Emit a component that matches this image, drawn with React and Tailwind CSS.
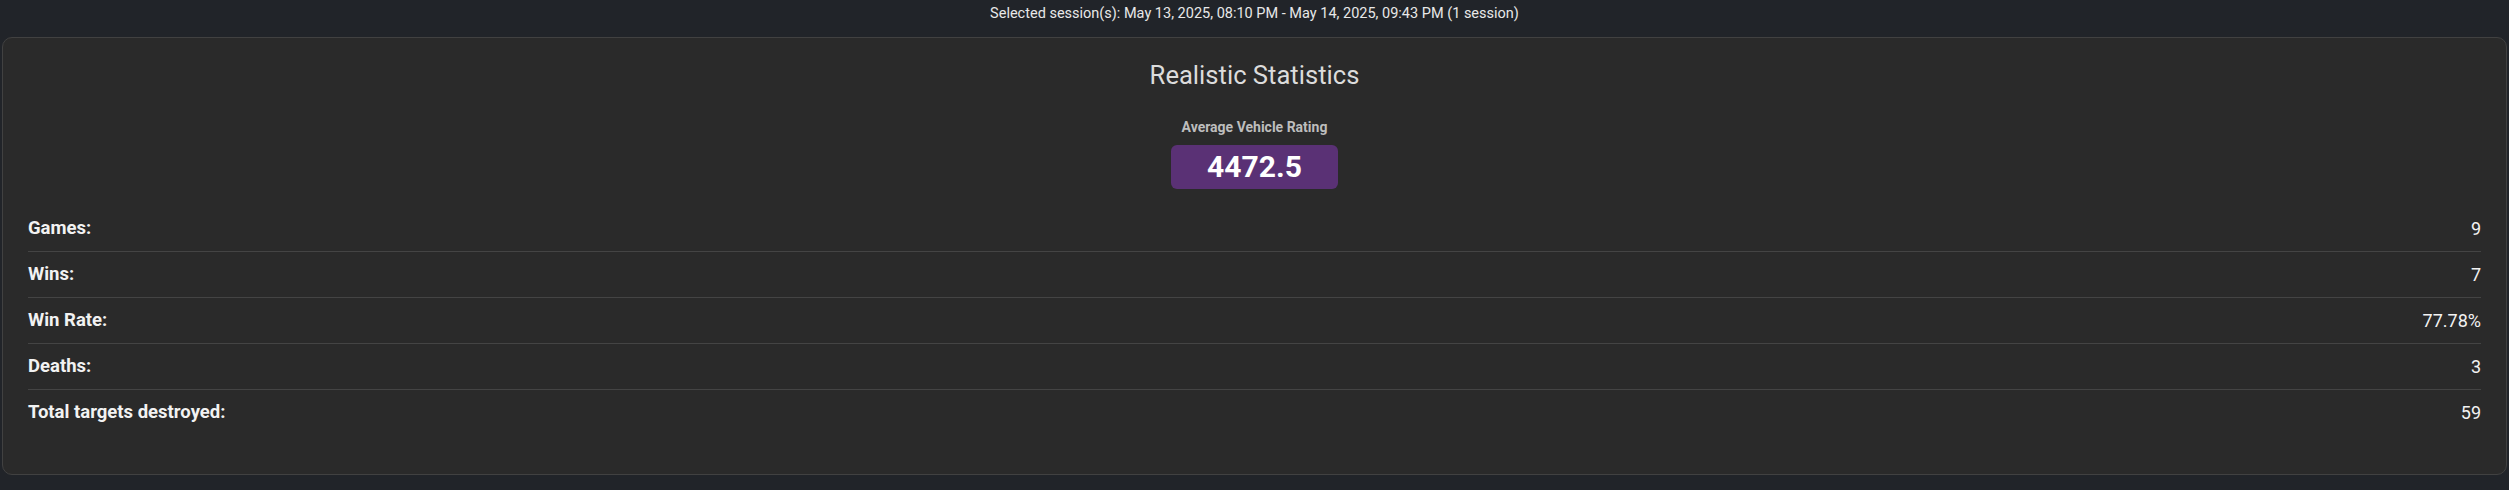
const stats = [
  { label: "Games:", value: "9" },
  { label: "Wins:", value: "7" },
  { label: "Win Rate:", value: "77.78%" },
  { label: "Deaths:", value: "3" },
  { label: "Total targets destroyed:", value: "59" },
];

const App = () => {
  return (
    <div className="min-h-screen bg-[#212429] font-['Roboto',sans-serif] px-[2px]">
      <div className="pt-[4px] pb-[13px] text-center text-[14.5px] leading-[20px] text-[#e8e8e8]">
        Selected session(s): May 13, 2025, 08:10 PM - May 14, 2025, 09:43 PM (1 session)
      </div>

      <div className="rounded-[10px] border border-[#414141] bg-[#2a2a2a] px-[25px] pt-[21px] pb-[39px]">
        <h2 className="text-center text-[25.6px] leading-[32px] font-normal text-[#dcdcdc]">
          Realistic Statistics
        </h2>

        <div className="mt-[27px] flex flex-col items-center">
          <div className="text-[14px] leading-[18px] font-bold text-[#bdbdbd]">
            Average Vehicle Rating
          </div>
          <div className="mt-[9px] rounded-[6px] bg-[#5a3175] px-[36px] py-[4px] text-[30px] leading-[36px] font-bold text-white">
            4472.5
          </div>
        </div>

        <div className="mt-[17px]">
          {stats.map((s, i) => (
            <div
              key={s.label}
              className={`flex justify-between py-[10px] text-[18px] leading-[25px] text-[#f2f2f2] ${
                i < stats.length - 1 ? "border-b border-[#444444]" : ""
              }`}
            >
              <span className="font-bold text-[18.5px]">{s.label}</span>
              <span>{s.value}</span>
            </div>
          ))}
        </div>
      </div>
    </div>
  );
};

export default App;
